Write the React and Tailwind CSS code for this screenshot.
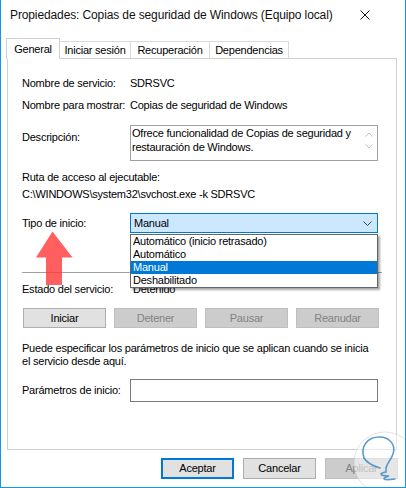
import React from "react";

const F = "font-['Liberation_Sans',Arial,sans-serif]";

function Row({ label, children, className = "" }) {
  return (
    <div className={`flex h-[13px] leading-[13px] ${className}`}>
      <div className="w-[108px] shrink-0 whitespace-nowrap">{label}</div>
      <div className="whitespace-nowrap">{children}</div>
    </div>
  );
}

function Btn({ children, disabled, primary, w = "w-[83px]", h = "h-[20px]" }) {
  const base = `${w} ${h} flex items-center justify-center leading-none`;
  if (primary)
    return <div className={`${base} bg-[#e1e1e1] border-2 border-[#0078d7]`}>{children}</div>;
  if (disabled)
    return <div className={`${base} bg-[#cccccc] border border-[#bfbfbf] text-[#838383]`}>{children}</div>;
  return <div className={`${base} bg-[#e1e1e1] border border-[#adadad]`}>{children}</div>;
}

export default function App() {
  return (
    <div className={`${F} relative overflow-hidden w-[406px] h-[488px] bg-white border-x border-b border-[#1196ea] flex flex-col text-[11px] text-black tracking-[-0.22px]`}>
      {/* title bar */}
      <div className="h-[30px] flex items-center pl-[9px] pr-[35px]">
        <div className="text-[12px] tracking-[-0.12px] text-[#111]">
          Propiedades: Copias de seguridad de Windows (Equipo local)
        </div>
        <svg className="ml-auto" width="10" height="10" viewBox="0 0 10 10">
          <path d="M0.5 0.5 L9.5 9.5 M9.5 0.5 L0.5 9.5" stroke="#111" strokeWidth="1" />
        </svg>
      </div>

      {/* tabs */}
      <div className="mt-[8px] h-[20px] flex items-end pl-[5px] relative z-10">
        <div className="w-[54px] h-[21px] -mb-px bg-white border-t border-x border-[#d0d0d0] flex justify-center pt-[4px] leading-[13px]">
          General
        </div>
        <div className="w-[71px] h-[17px] bg-white border-t border-r border-[#d9d9d9] flex justify-center pt-[2px] leading-[13px]">
          Iniciar sesión
        </div>
        <div className="w-[79px] h-[17px] bg-white border-t border-r border-[#d9d9d9] flex justify-center pt-[2px] leading-[13px]">
          Recuperación
        </div>
        <div className="w-[79px] h-[17px] bg-white border-t border-r border-[#d9d9d9] flex justify-center pt-[2px] leading-[13px]">
          Dependencias
        </div>
      </div>

      {/* panel */}
      <div className="ml-[6px] w-[390px] h-[392px] border border-[#d0d0d0] px-[14px] pt-[18px] flex flex-col relative">
        <Row label="Nombre de servicio:">SDRSVC</Row>
        <Row label="Nombre para mostrar:" className="mt-[9px]">Copias de seguridad de Windows</Row>

        <div className="flex mt-[13px]">
          <div className="w-[108px] shrink-0 pt-[6px] leading-[13px]">Descripción:</div>
          <div className="w-[248px] h-[36px] border border-[#a0a0a0] flex">
            <div className="flex-1 pl-[1px] leading-[14px] whitespace-nowrap">
              Ofrece funcionalidad de Copias de seguridad y<br />restauración de Windows.
            </div>
            <div className="w-[17px] flex flex-col items-center pt-[6px] gap-[7px]">
              <svg width="8" height="5" viewBox="0 0 8 5"><path d="M0.5 4.5 L4 1 L7.5 4.5" fill="none" stroke="#c2c2c2" /></svg>
              <svg width="8" height="5" viewBox="0 0 8 5"><path d="M0.5 0.5 L4 4 L7.5 0.5" fill="none" stroke="#c2c2c2" /></svg>
            </div>
          </div>
        </div>

        <div className="mt-[10px] leading-[13px]">Ruta de acceso al ejecutable:</div>
        <div className="mt-[4px] leading-[13px]">C:\WINDOWS\system32\svchost.exe -k SDRSVC</div>

        <div className="mt-[12px] flex items-center h-[20px]">
          <div className="w-[108px] shrink-0 leading-[13px]">Tipo de inicio:</div>
          <div className="relative w-[248px] h-[20px] border border-[#0078d7] bg-[#cce8ff] flex items-center pl-[3px] leading-[13px]">
            Manual
            <svg className="ml-auto mr-[5px]" width="9" height="5" viewBox="0 0 9 5">
              <path d="M0.5 0.5 L4.5 4.5 L8.5 0.5" fill="none" stroke="#444" />
            </svg>
            <div className="absolute z-20 left-[-1px] top-[20px] w-[248px] bg-white border border-[#646464] shadow-[2px_2px_2px_rgba(0,0,0,0.35)] flex flex-col">
              <div className="h-[13px] leading-[13px] pl-[2px]">Automático (inicio retrasado)</div>
              <div className="h-[13px] leading-[13px] pl-[2px]">Automático</div>
              <div className="h-[13px] leading-[13px] pl-[2px] bg-[#0078d7] text-white">Manual</div>
              <div className="h-[13px] leading-[13px] pl-[2px]">Deshabilitado</div>
            </div>
          </div>
        </div>

        <div className="mt-[39px] h-px bg-[#a0a0a0]" />

        <Row label="Estado del servicio:" className="mt-[10px]">
          <span className="pl-[3px]">Detenido</span>
        </Row>

        <div className="mt-[12px] flex gap-[8px] pl-[1px]">
          <Btn>Iniciar</Btn>
          <Btn disabled>Detener</Btn>
          <Btn disabled>Pausar</Btn>
          <Btn disabled>Reanudar</Btn>
        </div>

        <div className="mt-[14px] leading-[13px] whitespace-nowrap">
          Puede especificar los parámetros de inicio que se aplican cuando se inicia
          <br />
          el servicio desde aquí.
        </div>

        <div className="mt-[11px] flex items-center">
          <div className="w-[108px] shrink-0 leading-[13px]">Parámetros de inicio:</div>
          <div className="w-[248px] h-[23px] border border-[#7a7a7a] bg-white" />
        </div>
      </div>

      {/* bottom buttons */}
      <div className="mt-[8px] flex justify-end gap-[9px] pr-[7px]">
        <Btn primary w="w-[73px]" h="h-[21px]">Aceptar</Btn>
        <Btn w="w-[73px]" h="h-[21px]">Cancelar</Btn>
        <Btn disabled w="w-[73px]" h="h-[21px]">Aplicar</Btn>
      </div>

      {/* red arrow annotation */}
      <svg className="absolute left-[30px] top-[226px] z-30" width="48" height="64" viewBox="30 226 48 64">
        <path d="M51.5 231.5 L35 257.5 L45 257.5 L45 285 L61 285 L61 257.5 L71.5 257.5 Z" fill="rgba(255,55,55,0.8)" />
      </svg>

      {/* watermark logo */}
      <svg className="absolute left-[345px] top-[425px] z-30" width="80" height="80" viewBox="345 425 80 80">
        <circle cx="384" cy="463" r="31" fill="rgba(255,255,255,0.5)" stroke="rgba(200,200,200,0.5)" strokeWidth="1" />
        <path
          d="M363 458 C359 446 367 437 378 437 C389 437 395 445 392 454 C390 460 386 463 385 468 L385 472 C378 473 378 476 388 476 C381 478 380 481 394 479"
          fill="none"
          stroke="rgba(60,140,200,0.85)"
          strokeWidth="1.6"
          strokeLinecap="round"
        />
        <path d="M363 458 C366 463 372 466 379 468" fill="none" stroke="rgba(60,140,200,0.85)" strokeWidth="1.6" strokeLinecap="round" />
      </svg>
    </div>
  );
}
